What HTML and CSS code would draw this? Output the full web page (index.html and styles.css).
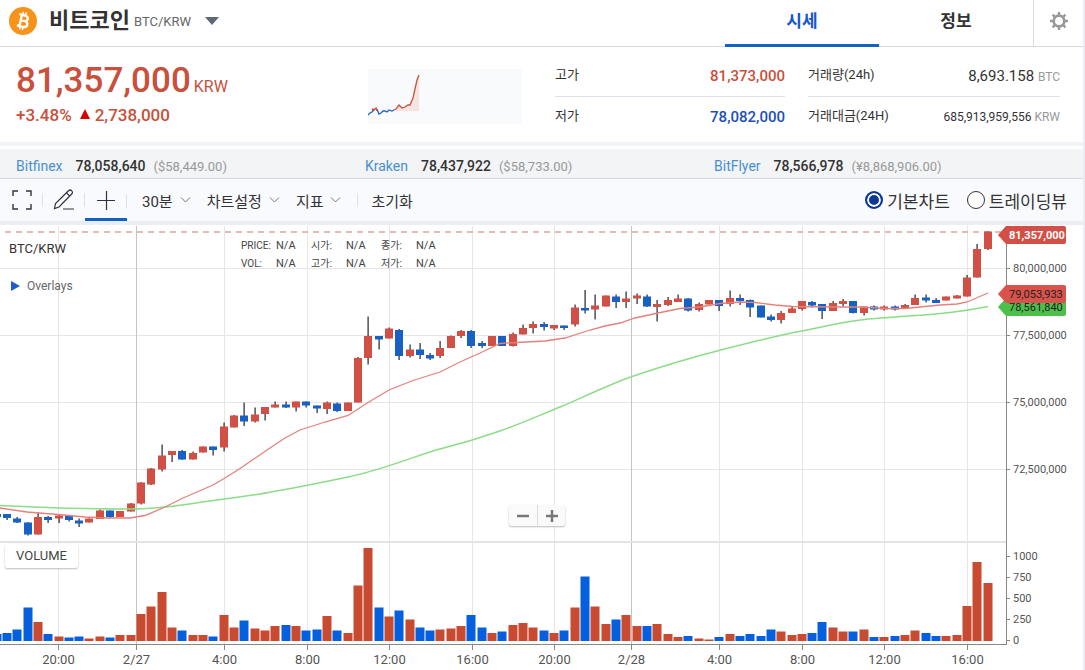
FILE: index.html
```html
<!DOCTYPE html>
<html lang="ko">
<head>
<meta charset="utf-8">
<meta name="viewport" content="width=device-width, initial-scale=1">
<title>비트코인 BTC/KRW</title>
<link rel="stylesheet" href="styles.css">
</head>
<body>
<div class="page">
  <header class="header">
    <button class="coin" type="button">
      <svg class="coin-logo" viewBox="0 0 28 28" aria-hidden="true">
        <circle cx="14" cy="14" r="14" fill="#f7931a"/>
        <g transform="rotate(13 14 14)" fill="none" stroke="#fff">
          <path d="M9 8.2h5.8c2.2 0 3.3 1 3.3 2.7s-1.2 2.8-3.3 2.8h-3.2 3.7c2.4 0 3.7 1.1 3.7 3s-1.4 3-3.8 3H9M11.6 8.2v11.5" stroke-width="2.3"/>
          <path d="M12.4 5v3.5M15.3 5v3.5M12.4 19.5V23M15.3 19.5V23" stroke-width="1.6"/>
        </g>
      </svg>
      <span class="coin-name">비트코인</span>
      <span class="coin-pair">BTC/KRW</span>
      <svg class="coin-arrow" viewBox="0 0 14 8" aria-hidden="true"><path d="M0 0h14L7 8z" fill="#5f6778"/></svg>
    </button>
    <nav class="tabs">
      <a class="tab tab-active" href="#price">시세</a>
      <a class="tab" href="#info">정보</a>
    </nav>
    <button class="settings" type="button" aria-label="설정">
      <svg viewBox="0 0 18 18" width="18" height="18" aria-hidden="true">
        <circle cx="9" cy="9" r="5.3" fill="none" stroke="#999" stroke-width="2.7"/>
        <path d="M9 0v3M9 15v3M0 9h3M15 9h3M2.6 2.6l2.2 2.2M13.2 13.2l2.2 2.2M2.6 15.4l2.2-2.2M13.2 4.8l2.2-2.2" stroke="#999" stroke-width="2.4"/>
      </svg>
    </button>
  </header>

  <section class="summary">
    <div class="quote">
      <div class="quote-price">81,357,000<span class="quote-unit">KRW</span></div>
      <div class="quote-change">+3.48%<svg class="quote-up" viewBox="0 0 10 10" aria-hidden="true"><path d="M5 0l5 10H0z" fill="#d60000"/></svg>2,738,000</div>
    </div>
    <svg class="spark" viewBox="0 0 154 55" aria-hidden="true">
      <rect width="154" height="55" fill="#f9fafc"/>
      <path d="M26 42l2-2 3-4 3 3 4-1 4-3 4-8 4-20 1-2V42z" fill="#f6e4e1"/>
      <path d="M0 46l2-2 2-1 1-2 1 1M9 40l2 5 2-1 2-2 2 0 2 1 2-2 3 1 2-1" fill="none" stroke="#2463c5" stroke-width="1.3"/>
      <path d="M4 41l1-1 1 1 2-2 1 3M26 41l2-1 3-4 3 3 3-1 3-2 2 0 3-7 2-9 2-9 2-5" fill="none" stroke="#c8503c" stroke-width="1.3"/>
    </svg>
    <dl class="stats stats-price">
      <div class="stat"><dt>고가</dt><dd class="up">81,373,000</dd></div>
      <div class="stat"><dt>저가</dt><dd class="down">78,082,000</dd></div>
    </dl>
    <dl class="stats stats-volume">
      <div class="stat"><dt>거래량(24h)</dt><dd>8,693.158 <small>BTC</small></dd></div>
      <div class="stat"><dt>거래대금(24H)</dt><dd class="compact">685,913,959,556 <small>KRW</small></dd></div>
    </dl>
  </section>

  <section class="ticker">
    <div class="exchange"><a href="#bitfinex">Bitfinex</a><b>78,058,640</b><span>($58,449.00)</span></div>
    <div class="exchange"><a href="#kraken">Kraken</a><b>78,437,922</b><span>($58,733.00)</span></div>
    <div class="exchange"><a href="#bitflyer">BitFlyer</a><b>78,566,978</b><span>(¥8,868,906.00)</span></div>
  </section>

  <div class="toolbar">
    <button class="tool" type="button" aria-label="전체화면">
      <svg width="20" height="20" viewBox="0 0 20 20"><path d="M1 6V1h5M14 1h5v5M19 14v5h-5M6 19H1v-5" fill="none" stroke="#2d3340" stroke-width="1.4"/></svg>
    </button>
    <button class="tool" type="button" aria-label="그리기">
      <svg width="22" height="22" viewBox="0 0 22 22"><path d="M1.500 19.500l1-5L15.500 1.800q1.600-1.600 3.200 0t0 3.200L6 18zM1.500 19.500L6 18M10 20h11M13.500 3.800l3.200 3.200" fill="none" stroke="#2d3340" stroke-width="1.2"/></svg>
    </button>
    <button class="tool tool-active" type="button" aria-label="십자선">
      <svg width="20" height="20" viewBox="0 0 20 20"><path d="M1 9.500h18M10.500 0v19" stroke="#2d3340" stroke-width="1.2"/></svg>
    </button>
    <div class="menus">
      <button class="menu" type="button">30분<svg viewBox="0 0 10 6"><path d="M.5.5L5 5 9.500.5"/></svg></button>
      <button class="menu" type="button">차트설정<svg viewBox="0 0 10 6"><path d="M.5.5L5 5 9.500.5"/></svg></button>
      <button class="menu" type="button">지표<svg viewBox="0 0 10 6"><path d="M.5.5L5 5 9.500.5"/></svg></button>
    </div>
    <button class="menu reset" type="button">초기화</button>
    <div class="views">
      <label class="view"><input type="radio" name="view" checked>기본차트</label>
      <label class="view"><input type="radio" name="view">트레이딩뷰</label>
    </div>
  </div>

  <main class="chart">
    <svg class="plot" id="plot" viewBox="0 225 1083 445" role="img" aria-label="BTC/KRW 30분 차트"></svg>
    <div class="legend">
      <div class="legend-title">BTC/KRW</div>
      <button class="overlays" type="button"><svg width="9" height="10" viewBox="0 0 9 10" aria-hidden="true"><path d="M0 0l9 5-9 5z" fill="#1f5ccc"/></svg>Overlays</button>
    </div>
    <dl class="readout">
      <dt>PRICE:</dt><dd>N/A</dd><dt>시가:</dt><dd>N/A</dd><dt>종가:</dt><dd>N/A</dd>
      <dt>VOL:</dt><dd>N/A</dd><dt>고가:</dt><dd>N/A</dd><dt>저가:</dt><dd>N/A</dd>
    </dl>
    <div class="volume-label">VOLUME</div>
    <div class="zoom">
      <button type="button" aria-label="축소"><svg width="12" height="12" viewBox="0 0 12 12"><path d="M0 6h12" stroke="#777" stroke-width="2.500"/></svg></button>
      <button type="button" aria-label="확대"><svg width="12" height="12" viewBox="0 0 12 12"><path d="M0 6h12M6 0v12" stroke="#777" stroke-width="2.500"/></svg></button>
    </div>
  </main>
</div>
<script src="chart.js"></script>
</body>
</html>
```
FILE: styles.css
```css
* { box-sizing: border-box; }
body {
  margin: 0;
  background: #fff;
  color: #333;
  font-family: Roboto, "Noto Sans CJK KR", sans-serif;
}
button {
  margin: 0;
  padding: 0;
  border: 0;
  background: none;
  color: inherit;
  font: inherit;
  cursor: pointer;
}
a { text-decoration: none; }
dl, dd { margin: 0; }
.page { border-right: 2px solid #ebedf2; }

.header {
  display: flex;
  height: 47px;
  border-bottom: 1px solid #d8dade;
}
.coin {
  display: flex;
  align-items: center;
  padding: 0 0 4px 9px;
  margin-right: auto;
}
.coin-logo { width: 28px; height: 28px; margin-right: 12px; }
.coin-name { font-size: 22px; font-weight: 700; line-height: 30px; }
.coin-pair { margin-left: 4px; font-size: 13px; color: #666; }
.coin-arrow { width: 14px; height: 8px; margin-left: 14px; }
.tabs { display: flex; }
.tab {
  width: 154px;
  height: 47px;
  padding-bottom: 3px;
  color: #333;
  font-size: 17px;
  font-weight: 700;
  line-height: 42px;
  text-align: center;
}
.tab-active { border-bottom: 3px solid #1262c4; color: #1556cf; }
.settings {
  display: flex;
  align-items: center;
  justify-content: center;
  width: 50px;
  padding-bottom: 4px;
  border-left: 1px solid #d8dade;
}

.summary {
  display: flex;
  height: 99px;
  padding: 0 23px 0 16px;
  border-bottom: 4px solid #f2f3f7;
}
.quote { flex: 1; padding-top: 13px; color: #c8503c; white-space: nowrap; }
.quote-price { font-size: 35px; font-weight: 500; line-height: 42px; }
.quote-unit { margin-left: 3px; font-size: 16px; font-weight: 400; line-height: 16px; }
.quote-change { font-size: 17px; font-weight: 500; line-height: 26px; }
.quote-up { width: 10px; height: 10px; margin: 0 5px 2px 8px; }
.spark { width: 154px; height: 55px; margin: 22px 33px 0 0; }
.stats { width: 230px; padding-top: 9px; }
.stats-volume { width: 252px; margin-left: 23px; }
.stat {
  display: flex;
  align-items: center;
  justify-content: space-between;
  height: 39px;
  font-size: 14px;
  line-height: 20px;
  white-space: nowrap;
}
.stat:first-child { height: 41px; border-bottom: 1px solid #dfe1e8; }
.stat dt { padding-bottom: 2px; font-size: 13px; }
.stat dd { font-size: 15px; }
.stat .up, .stat .down { font-weight: 500; }
.stat small { color: #999; font-size: 12px; }
.stat .compact { font-size: 12px; }
.up { color: #c8503c; }
.down { color: #1a4fc0; }

.ticker {
  display: flex;
  height: 30px;
  margin-top: 3px;
  padding-left: 16px;
  border-bottom: 1px solid #d5d7dc;
  background: #f2f4f6;
  line-height: 34px;
}
.exchange { flex: 0 0 349px; font-size: 14px; white-space: nowrap; }
.exchange a { color: #4a90cf; }
.exchange b { margin: 0 8px 0 13px; font-weight: 500; }
.exchange span { color: #999; font-size: 13px; }

.toolbar {
  display: flex;
  height: 46px;
  padding: 0 16px 0 1px;
  border-bottom: 4px solid #ebedf2;
  background: #f9fafd;
}
.tool {
  position: relative;
  display: flex;
  align-items: center;
  justify-content: center;
  width: 42px;
}
.tool-active { border-bottom: 3px solid #1262c4; padding-top: 4px; }
.tool::after, .reset::before {
  content: "";
  position: absolute;
  right: 0;
  width: 1px;
  height: 14px;
  background: #dfe1e7;
}
.menus { display: flex; gap: 16px; padding: 0 16px 0 15px; }
.menu {
  display: flex;
  align-items: center;
  gap: 7px;
  font-size: 15px;
}
.menu svg { width: 11px; height: 6px; fill: none; stroke: #777; }
.reset { position: relative; padding-left: 14px; }
.reset::before { left: 0; }
.views { display: flex; gap: 17px; margin-left: auto; }
.view { display: flex; align-items: center; gap: 4px; font-size: 17px; }
.view input {
  appearance: none;
  width: 18px;
  height: 18px;
  margin: 0;
  border: 1px solid #333;
  border-radius: 50%;
  background: #fff;
}
.view input:checked {
  border: 2px solid #0b3796;
  background: #0b3796;
  box-shadow: inset 0 0 0 2px #fff;
}

.chart { position: relative; }
.plot { display: block; width: 100%; height: auto; }
.grid { stroke: #e6e6e6; }
.day { stroke: #c4c4c4; }
.axis { stroke: #888; }
.axis-text { fill: #555; font-size: 11px; }
.time-text { fill: #555; font-size: 13px; text-anchor: middle; }
.tag-text { fill: #222; font-size: 11px; }
.tag-last { fill: #fff; font-weight: 700; }
.legend { position: absolute; top: 14px; left: 9px; }
.legend-title { font-size: 13px; line-height: 20px; }
.overlays {
  display: flex;
  align-items: center;
  gap: 7px;
  margin: 18px 0 0 2px;
  color: #666;
  font-size: 12px;
  line-height: 18px;
}
.readout {
  position: absolute;
  top: 12px;
  left: 241px;
  display: grid;
  grid-template-columns: 35px 35px 35px 35px 35px 35px;
  color: #444;
  font-size: 11px;
  line-height: 18px;
}
.readout dt { font-size: 10px; }
.volume-label {
  position: absolute;
  top: 319px;
  left: 5px;
  padding: 0 11px;
  border-radius: 2px;
  background: #fff;
  box-shadow: 0 1px 2px #bbb;
  color: #444;
  font-size: 13px;
  line-height: 24px;
}
.zoom {
  position: absolute;
  top: 280px;
  left: 47%;
  display: flex;
  border-radius: 2px;
  background: #fafafa;
  box-shadow: 0 1px 2px #bbb;
}
.zoom button {
  display: flex;
  align-items: center;
  justify-content: center;
  width: 28px;
  height: 21px;
}
.zoom button + button { border-left: 1px solid #ddd; }
```
FILE: chart.js
```js
// One row per half hour: direction, body top, body bottom, wick top, wick bottom, volume bar top.
const candles = `
b 514 517 514 517 634|b 514 518 514 520 633|b 518.5 522.5 517 523 629.5|b 522.5 534.5 522 535.5 607.5
r 517 534.5 512.5 534.5 622|b 517 520 516 523 634|r 515.5 518.5 514.5 523 636.5|b 516 520 516 521.5 637.5
b 520.5 523.5 518.5 527 636.5|r 518.5 522.5 518.5 522.5 638.5|r 510.5 519 509.5 519 636.5|b 510.5 517 510.5 518 637.5
r 511 517 511 517 635|r 503.5 511.5 503 511.5 635|r 482.5 503.5 482 504.5 614|r 468.5 484.5 468 485 606.5
r 455.5 469.5 444.5 471.5 592|r 451 455 451 462 627.5|b 451 459.5 450 460 630.5|r 453 459.5 451.5 459.5 635
r 446.5 452.5 446.5 452.5 635|b 446.5 450 446.5 455.5 636.5|r 426.5 447.5 422.5 451.5 615|r 415.5 427.5 415 427.5 627.5
b 415.5 421.5 402.5 426 620.5|r 414.5 421.5 407.5 422.5 628.5|r 407 414 407 420.5 630.5|r 404.5 407.5 401.5 407.5 626
b 404.5 407.5 401.5 408 625|r 401.5 407.5 401.5 411.5 626|b 401.5 405.5 401.5 407.5 630.5|b 405.5 408.5 405.5 413 629.5
r 402.5 409 401.5 414 616|b 403.5 411 402.5 412 630.5|r 402.5 411 402.5 411 633|r 358 402.5 357 402.5 585.5
r 336 358 316.5 364.5 548|b 336 339.5 336 349.5 607.5|r 328.5 338.5 327.5 338.5 616.5|b 330 356 329 360 610.5
r 349.5 356 344.5 357.5 619.5|b 349.5 355 343 359 627.5|b 355 358.5 353 360 630.5|r 348 356 341 358 629.5
r 336 348 335.5 348 628.5|r 331 336 330 338 626|b 331 346 330 348 615|b 343 346 341 348 627.5
r 336 346 336 346 633|b 336 346 336 346 631.5|r 334 346 332.5 346.5 625|r 328 334.5 324.5 334.5 623
r 324 328 321.5 333.5 627.5|b 324 327 322 330.5 630.5|r 325 328.5 325 330 633|b 325.5 328 325.5 330 630.5
r 307.5 324.5 304.5 326.5 607.5|b 308 310.5 290 313.5 576.5|r 305.5 309.5 294.5 319.5 606.5|r 295.5 306.5 295.5 306.5 624
b 296.5 302 294.5 308 619.5|r 298.5 302 291.5 308 615|r 295.5 298.5 293.5 304 626|b 296.5 306.5 294.5 307 626
r 304 307 300 321.5 624|r 300 305 297 306 634|r 298.5 302 294.5 302 637|b 298.5 310.5 298 311.5 636
r 304 310 302.5 311.5 638.5|r 300 304.5 300 304.5 639.5|b 300 306 300 311 637|r 298 304 290.5 306.5 634
b 298 301 294.5 305 636|b 300 307.5 299.5 317 634|b 305.5 317.5 305.5 317.5 636|b 316.5 320 314.5 321.5 629.5
r 313 320 311 323.5 631.5|r 308.5 313 306.5 313 635|r 301 309 301 310.5 634|b 302 305.5 301 307.5 633
b 304 311 304 319 622|r 303 311 301 311 627.5|r 301 304 299 306.5 631.5|b 301 313 301 313.5 631.5
r 306.5 313 306.5 315.5 629.5|b 306.5 309.5 305.5 310.5 637|r 306.5 309.5 305.5 310.5 637|b 306.5 309.5 305.5 310.5 636
r 305 308.5 304 308.5 635|r 298 305 294.5 305 630.5|b 297.5 300.5 294.5 302.5 633|b 300 303 298 303 636
r 296.5 300.5 296.5 300.5 636|r 295.5 298.5 295 298.5 635|r 277.5 296.5 275 296.5 606|r 249 277.5 244 277.5 562
r 231.5 249 231.5 250 583`.trim().split(/[|\n]/);

const rect = (x, y, w, h, fill) => `<rect x="${x}" y="${y}" width="${w}" height="${h}" fill="${fill}"/>`;
const line = (x1, y1, x2, y2, cls) => `<line x1="${x1}" y1="${y1}" x2="${x2}" y2="${y2}" class="${cls}"/>`;
const text = (x, y, label, cls) => `<text x="${x}" y="${y}" class="${cls}">${label}</text>`;

const times = [[58.5, '20:00'], [136.5, '2/27'], [224.5, '4:00'], [307.5, '8:00'], [389.5, '12:00'], [472.5, '16:00'],
  [554.5, '20:00'], [631.5, '2/28'], [719.5, '4:00'], [802.5, '8:00'], [884.5, '12:00'], [967.5, '16:00']];
const prices = [[268.5, '80,000,000'], [335.5, '77,500,000'], [402.5, '75,000,000'], [469.5, '72,500,000']];
const volumes = [[556.5, '1000'], [577.5, '750'], [598.5, '500'], [619.5, '250'], [640.5, '0']];

let out = '';
for (const [y, label] of prices) {
  out += line(0, y, 1006, y, 'grid') + line(1006, y, 1010, y, 'axis') + text(1013, y + 3, label, 'axis-text');
}
for (const [x, label] of times) {
  out += line(x, 226, x, 644, label.includes('/') ? 'day' : 'grid');
  out += line(x, 644, x, 650, 'axis') + text(x, 664, label, 'time-text');
}
for (const [y, label] of volumes) {
  out += line(1006, y, 1010, y, 'axis') + text(1013, y + 3, label, 'axis-text');
}
out += rect(0, 541, 1006, 2, '#e3e3e3');
out += '<path d="M0 232H1006" stroke="#dda29c" stroke-width="1.5" stroke-dasharray="6 5" stroke-dashoffset="-5"/>';

candles.forEach((row, index) => {
  const [dir, ...values] = row.split(' ');
  const [top, bottom, high, low, volume] = values.map(Number);
  const x = Math.round(58.5 + 10.324 * (index - 6));
  out += rect(x - 0.5, high, 1.2, low - high, '#1d2733');
  out += rect(x - 4, top, 8, bottom - top, dir === 'r' ? '#d24f45' : '#1760c4');
  out += rect(x - 4.5, volume, 9, 641 - volume, dir === 'r' ? '#c84b31' : '#0560df');
});

out += '<path d="M0 505.500C40 507.500 90 509 130 509S190 503 225 499 310 485 348 477 420 454 440 449 480 438 500 431 545 413 560 407 610 384 632 376.500 690 358 719 350.500 775 336 802 331 840 322 865 319.500 930 315 950 312.500 975 309 988 306.500" fill="none" stroke="#8cdc88" stroke-width="1.500"/>';
out += '<polyline points="0,508 27,512 58,514.5 85,517 105,518 130,518 145,515.5 165,507 182,498.5 213,485 225,478 240,468.5 270,448 285,438 300,430 325,422 348,415.5 368,402.5 390,389.5 413,380.5 440,372 460,362 480,353 500,343.5 517,342.5 545,341 565,338 590,330 605,326 620,323 635,318 658,313 680,308.5 700,307 720,303.5 740,302 755,302.5 775,305 793,306.5 835,307 860,307 885,308.5 905,308.5 925,306.5 940,305 957,304 967,302 988,293" fill="none" stroke="#e5817b" stroke-width="1.3"/>';

out += line(1006.5, 226, 1006.5, 645, 'axis') + line(0, 644.5, 1007, 644.5, 'axis');

const tags = [[307, '78,561,840', '#4cc04a', ''], [294, '79,053,933', '#d9534c', ''], [235, '81,357,000', '#d24f45', ' tag-last']];
for (const [y, label, fill, cls] of tags) {
  out += `<path d="M998 ${y}l8-9h58q2 0 2 2v14q0 2-2 2h-58z" fill="${fill}"/>`;
  out += text(1009, y + 4, label, 'tag-text' + cls);
}
document.getElementById('plot').innerHTML = out;
```
